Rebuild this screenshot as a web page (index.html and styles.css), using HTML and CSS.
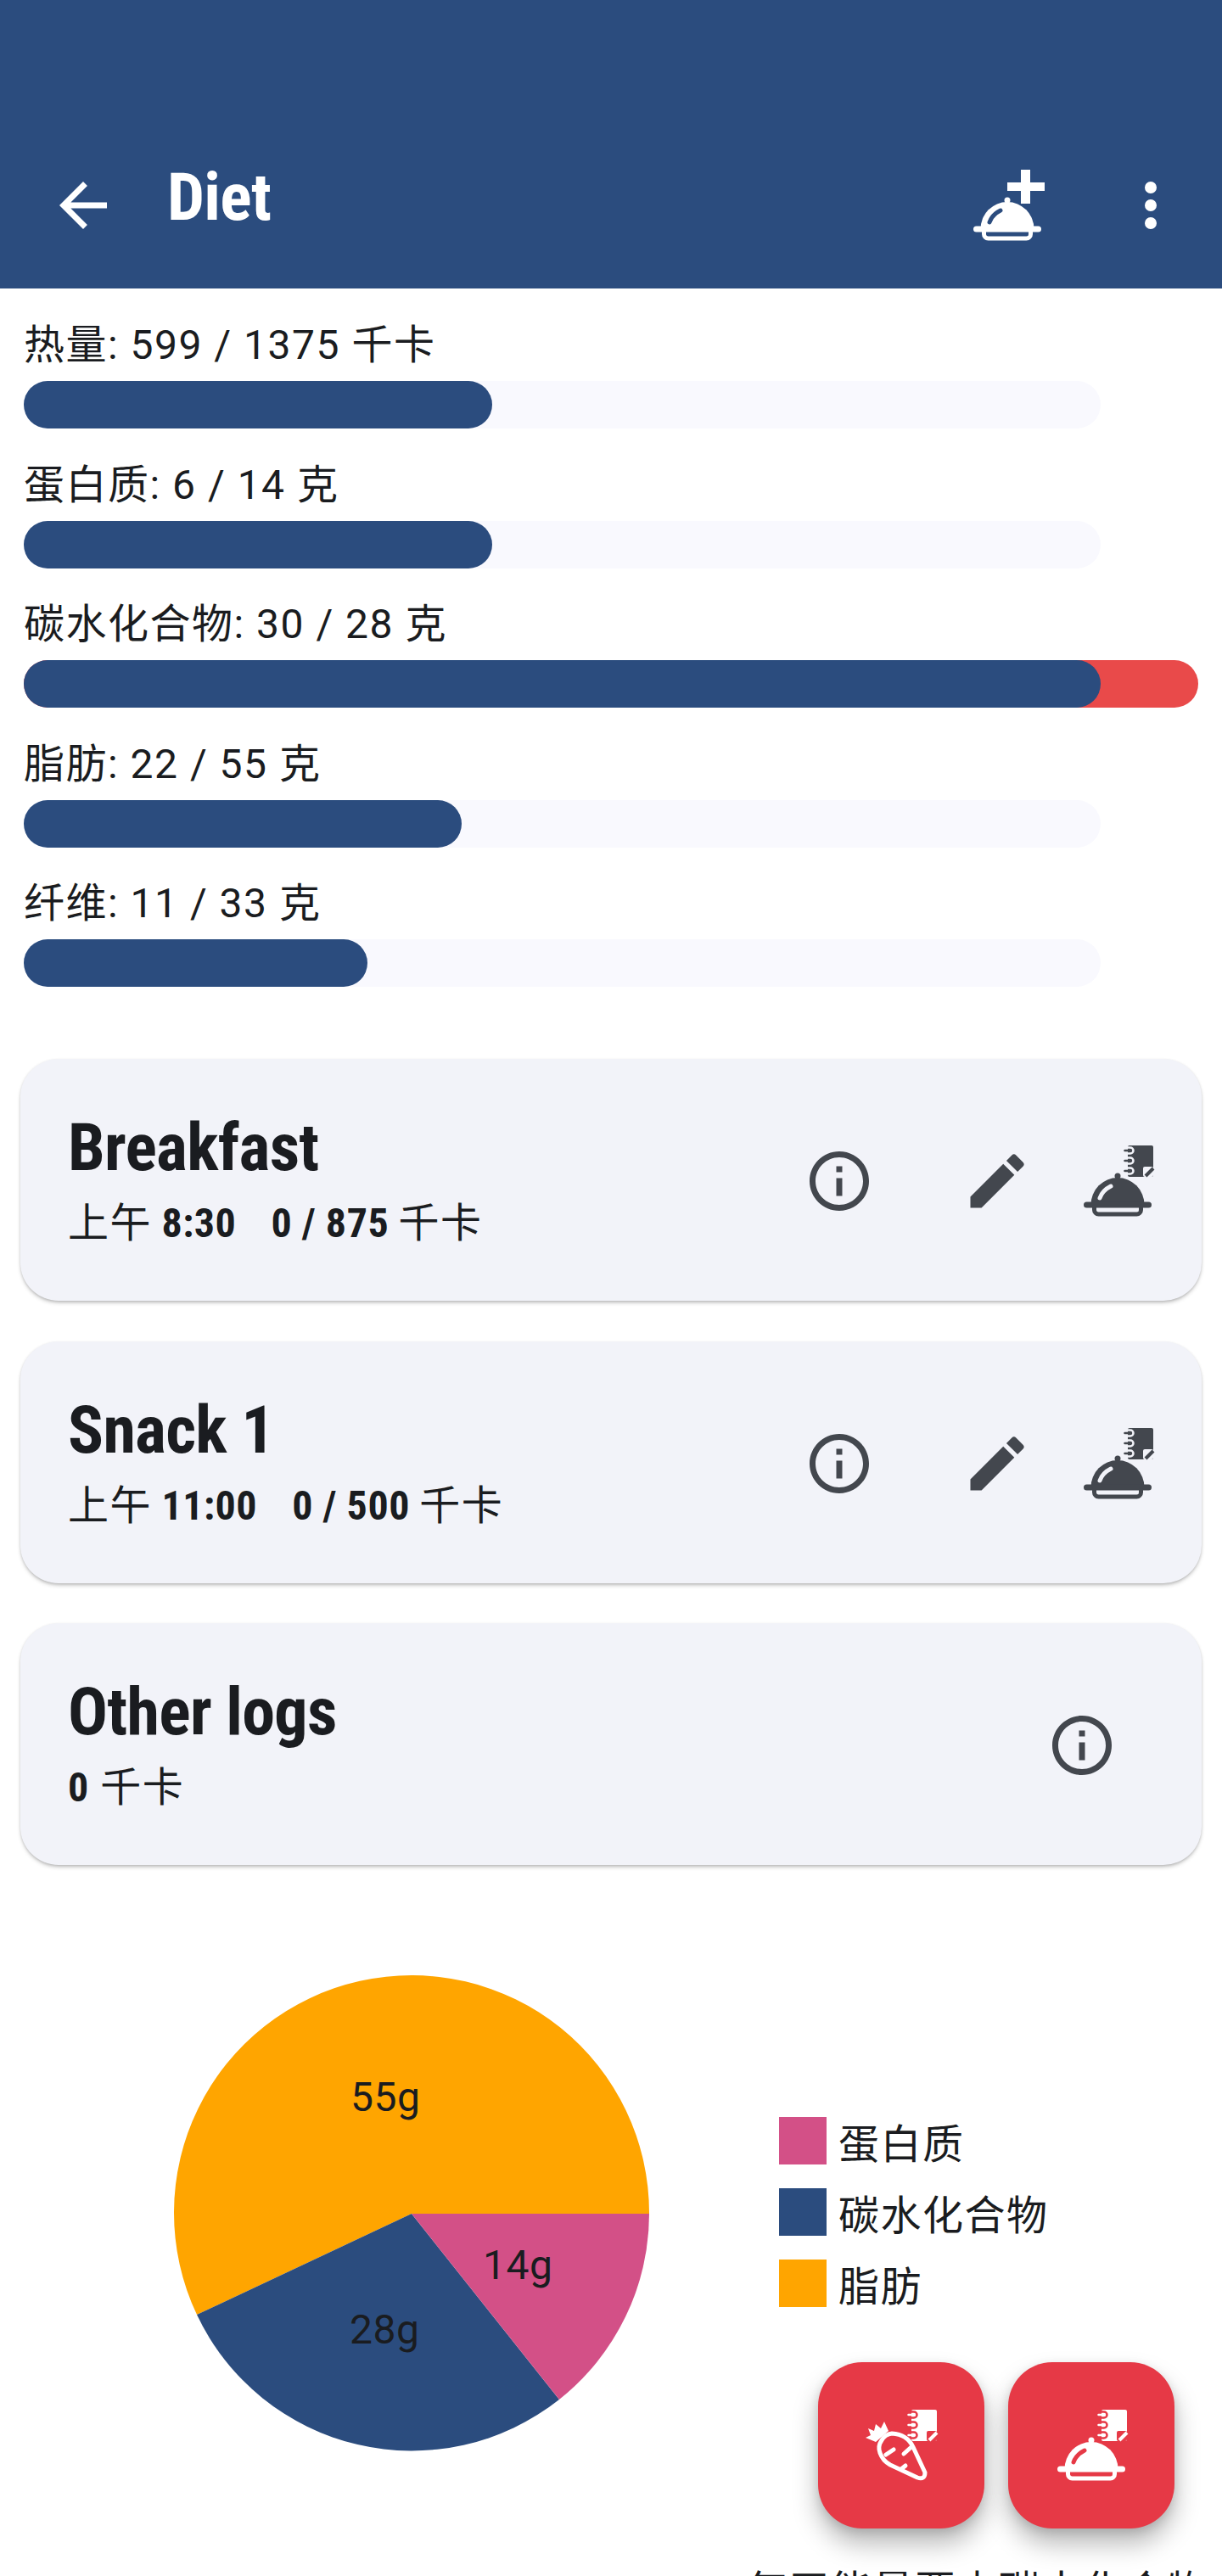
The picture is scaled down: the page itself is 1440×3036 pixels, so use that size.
FILE: index.html
```html
<!DOCTYPE html>
<html lang="zh">
<head>
    <meta charset="UTF-8">
    <title>Diet</title>
    <link rel="stylesheet" href="styles.css">
</head>

<body>

<svg class="defs" width="0" height="0">
    <symbol id="cloche" viewBox="0 0 84 84" overflow="visible">
        <circle cx="42" cy="36" r="3.5"/>
        <path d="M10.500 70 A31.500 32 0 0 1 73.500 70 Z"/>
        <rect x="2" y="66.500" width="80" height="7" rx="3.500"/>
        <path class="cut" d="M21 62 Q24 53 34 48"/>
        <path class="line" d="M14.500 72 v4 a5 5 0 0 0 5 5 h45 a5 5 0 0 0 5 -5 v-4"/>
    </symbol>
    <symbol id="notebook" viewBox="0 0 84 84" overflow="visible">
        <rect x="54" y="0" width="30" height="37" rx="2"/>
        <path class="cut thin" d="M54 2.500 h3 a3.500 3.500 0 0 1 0 7 h-3 M54 14.500 h3 a3.500 3.500 0 0 1 0 7 h-3 M54 26.500 h3 a3.500 3.500 0 0 1 0 7 h-3"/>
        <path class="line thin" d="M50.500 6 h7 M50.500 18 h7 M50.500 30 h7"/>
        <rect class="cut-fill" x="72" y="25" width="12" height="12" rx="2"/>
        <path class="line thick" d="M75 36 L84 27"/>
    </symbol>
</svg>

<header class="top-bar">
    <svg class="icon" viewBox="0 0 24 24"><path d="M20 11H7.830l5.590-5.590L12 4l-8 8 8 8 1.410-1.410L7.830 13H20v-2z"/></svg>
    <h1 class="top-title">Diet</h1>
    <svg class="icon add-meal" viewBox="0 0 84 84">
        <use href="#cloche"/>
        <path d="M58 0h11v15h17v10H69v15H58V25H42V15h16z"/>
    </svg>
    <svg class="icon more" viewBox="0 0 24 24"><path d="M12 8a2 2 0 1 0 0-4 2 2 0 0 0 0 4zm0 2a2 2 0 1 0 0 4 2 2 0 0 0 0-4zm0 6a2 2 0 1 0 0 4 2 2 0 0 0 0-4z"/></svg>
</header>

<section class="goals">
    <div class="goal">
        <div class="goal-label">热量: 599 / 1375 千卡</div>
        <div class="track"><div class="fill" style="width: 552px"></div></div>
    </div>
    <div class="goal">
        <div class="goal-label">蛋白质: 6 / 14 克</div>
        <div class="track"><div class="fill" style="width: 552px"></div></div>
    </div>
    <div class="goal">
        <div class="goal-label">碳水化合物: 30 / 28 克</div>
        <div class="track"><div class="over"></div><div class="fill" style="width: 1269px"></div></div>
    </div>
    <div class="goal">
        <div class="goal-label">脂肪: 22 / 55 克</div>
        <div class="track"><div class="fill" style="width: 516px"></div></div>
    </div>
    <div class="goal">
        <div class="goal-label">纤维: 11 / 33 克</div>
        <div class="track"><div class="fill" style="width: 405px"></div></div>
    </div>
</section>

<section class="meals">
    <article class="card">
        <div class="card-text">
            <h2 class="card-title">Breakfast</h2>
            <p class="card-sub">上午 <b class="time">8:30</b>&nbsp;&nbsp; <b class="kcal">0 / 875</b> 千卡</p>
        </div>
        <svg class="icon info" viewBox="0 0 24 24"><path d="M11 7h2v2h-2zm0 4h2v6h-2zm1-9C6.480 2 2 6.480 2 12s4.480 10 10 10 10-4.480 10-10S17.520 2 12 2zm0 18c-4.410 0-8-3.590-8-8s3.590-8 8-8 8 3.590 8 8-3.590 8-8 8z"/></svg>
        <svg class="icon edit" viewBox="0 0 24 24"><path d="M3 17.250V21h3.750L17.810 9.940l-3.750-3.750L3 17.250zM20.710 7.040a1 1 0 0 0 0-1.410l-2.340-2.340a1 1 0 0 0-1.410 0l-1.830 1.830 3.750 3.750 1.830-1.830z"/></svg>
        <svg class="icon log" viewBox="0 0 84 84"><use href="#cloche"/><use href="#notebook"/></svg>
    </article>

    <article class="card">
        <div class="card-text">
            <h2 class="card-title">Snack 1</h2>
            <p class="card-sub">上午 <b class="time">11:00</b>&nbsp;&nbsp; <b class="kcal">0 / 500</b> 千卡</p>
        </div>
        <svg class="icon info" viewBox="0 0 24 24"><path d="M11 7h2v2h-2zm0 4h2v6h-2zm1-9C6.480 2 2 6.480 2 12s4.480 10 10 10 10-4.480 10-10S17.520 2 12 2zm0 18c-4.410 0-8-3.590-8-8s3.590-8 8-8 8 3.590 8 8-3.590 8-8 8z"/></svg>
        <svg class="icon edit" viewBox="0 0 24 24"><path d="M3 17.250V21h3.750L17.810 9.940l-3.750-3.750L3 17.250zM20.710 7.040a1 1 0 0 0 0-1.410l-2.340-2.340a1 1 0 0 0-1.410 0l-1.830 1.830 3.750 3.750 1.830-1.830z"/></svg>
        <svg class="icon log" viewBox="0 0 84 84"><use href="#cloche"/><use href="#notebook"/></svg>
    </article>

    <article class="card card-other">
        <div class="card-text">
            <h2 class="card-title">Other logs</h2>
            <p class="card-sub"><b>0</b> 千卡</p>
        </div>
        <svg class="icon info" viewBox="0 0 24 24"><path d="M11 7h2v2h-2zm0 4h2v6h-2zm1-9C6.480 2 2 6.480 2 12s4.480 10 10 10 10-4.480 10-10S17.520 2 12 2zm0 18c-4.410 0-8-3.590-8-8s3.590-8 8-8 8 3.590 8 8-3.590 8-8 8z"/></svg>
    </article>
</section>

<section class="chart">
    <svg class="pie" viewBox="0 0 562 562">
        <path fill="#ffa500" d="M281 281 L561 281 A280 280 0 1 0 28 400 Z"/>
        <path fill="#2b4c7e" d="M281 281 L28 400 A280 280 0 0 0 455 500 Z"/>
        <path fill="#d35087" d="M281 281 L455 500 A280 280 0 0 0 561 281 Z"/>
        <text x="209" y="160">55g</text>
        <text x="365" y="358">14g</text>
        <text x="208" y="434">28g</text>
    </svg>
    <ul class="legend">
        <li><span class="swatch protein"></span>蛋白质</li>
        <li><span class="swatch carbs"></span>碳水化合物</li>
        <li><span class="swatch fat"></span>脂肪</li>
    </ul>
</section>

<p class="note">每天能量要由碳水化合物</p>

<button class="fab fab-food">
    <svg class="icon" viewBox="0 0 84 84">
        <path d="M0 33l12 5 15-13-5-11-4 8-6-5-2 8-7-3 3 8z"/>
        <path class="line" d="M31 28 Q23 29 19 36 Q14 43 17 51 Q20 60 29 65 L61 80 Q70 83 70 74 L56 44 Q49 29 31 28 Z M24 53 L33 47 M45 52 L55 43 M42 70 L47 66"/>
        <use href="#notebook"/>
    </svg>
</button>
<button class="fab fab-meal">
    <svg class="icon" viewBox="0 0 84 84"><use href="#cloche"/><use href="#notebook"/></svg>
</button>

</body>

</html>
```

FILE: styles.css
```css
:root {
    --navy:    #2b4c7e;
    --ink:     #1a1c20;
    --card-bg: #f2f3f9;
}

html, body {
    margin:     0;
    padding:    0;
}
body {
    position:   relative;
    height:     3036px;
    overflow:   hidden;
    background: #fff;
    color:      var(--ink);
    font-family: Roboto, "Noto Sans CJK SC", sans-serif;
    font-size:  48px;
    letter-spacing: 1.500px;
}

.defs {
    position:   absolute;
}

/* icons are all 84px boxes (28dp at 3x) */
.icon {
    flex:       none;
    width:      84px;
    height:     84px;
    fill:       currentColor;
    overflow:   visible;
}
.line {
    fill:       none;
    stroke:     currentColor;
    stroke-width: 5;
    stroke-linecap: round;
    stroke-linejoin: round;
}
.cut {
    fill:       none;
    stroke:     var(--cut);
    stroke-width: 5;
    stroke-linecap: round;
}
.cut-fill {
    fill:       var(--cut);
}
.thin {
    stroke-width: 2.500;
}
.thick {
    stroke-width: 4;
    stroke-linecap: butt;
}

.top-bar {
    --cut:      var(--navy);
    display:    flex;
    align-items: flex-start;
    box-sizing: border-box;
    height:     340px;
    padding:    200px 0 0 56px;
    background: var(--navy);
    color:      #fff;
}
.top-title {
    flex:       1;
    margin:     -19px 0 0 57px;
    font-size:  78px;
    font-weight: 700;
    font-stretch: 75%;
    letter-spacing: -0.700px;
    line-height: 104px;
}
.add-meal {
    margin-right: 85px;
}
.more {
    margin-right: 42px;
}

.goals {
    display:    flex;
    flex-direction: column;
    gap:        34.500px;
    padding:    35px 28px 0;
}
.goal {
    display:    flex;
    flex-direction: column;
    gap:        10px;
}
.goal-label {
    line-height: 64px;
}
.track {
    position:   relative;
    width:      1269px;
    height:     56px;
    border-radius: 28px;
    background: #f9f9fe;
}
.fill {
    position:   relative;
    height:     100%;
    border-radius: 28px;
    background: var(--navy);
}
.over {
    position:   absolute;
    top:        0;
    left:       0;
    width:      1384px;
    height:     100%;
    border-radius: 28px;
    background: #e94a4a;
}

.meals {
    display:    flex;
    flex-direction: column;
    gap:        47.500px;
    margin:     85px 24px 0;
}
.card {
    --cut:      var(--card-bg);
    display:    flex;
    align-items: center;
    box-sizing: border-box;
    height:     285px;
    padding:    0 57px 0 56px;
    border-radius: 45px;
    background: var(--card-bg);
    box-shadow: 0 3px 5px -1px rgba(0,0,0,0.25), 0 1px 3px rgba(0,0,0,0.1);
}
.card-text {
    flex:       1;
    padding-top: 2px;
}
.card-title {
    margin:     0 0 13px;
    font-size:  78px;
    font-weight: 700;
    font-stretch: 75%;
    letter-spacing: -0.700px;
    line-height: 88px;
}
.card-sub {
    margin:     0;
    line-height: 64px;
}
.card-sub b {
    font-weight: 700;
    font-stretch: 75%;
    letter-spacing: 0.500px;
}
.card-sub .time {
    margin-left: -2px;
}
.card-sub .kcal {
    margin-left: 1px;
    margin-right: -2px;
}
.card .icon {
    color:      #43474e;
    margin-top: 3px;
}
.info {
    margin-right: 102px;
}
.edit {
    margin-right: 58px;
}
.card-other {
    padding-right: 99px;
}
.card-other .info {
    margin-right: 0;
}

.chart {
    display:    flex;
    align-items: center;
    margin:     130px 0 0 204px;
}
.pie {
    flex:       none;
    width:      562px;
    height:     562px;
}
.pie text {
    font-family: Roboto, sans-serif;
    font-size:  48px;
    letter-spacing: 0.500px;
    fill:       var(--ink);
}
.legend {
    display:    flex;
    flex-direction: column;
    gap:        28px;
    margin:     0 0 4px 152px;
    padding:    0;
    list-style: none;
}
.legend li {
    display:    flex;
    align-items: center;
    gap:        14px;
    height:     56px;
}
.swatch {
    width:      56px;
    height:     56px;
}
.protein { background: #d35087; }
.carbs   { background: var(--navy); }
.fat     { background: #ffa500; }

.note {
    margin:     132px 0 0 880px;
    white-space: nowrap;
    line-height: 64px;
}

.fab {
    --cut:      #e63946;
    position:   absolute;
    top:        2784px;
    display:    grid;
    place-items: center;
    width:      196px;
    height:     196px;
    padding:    0;
    border:     none;
    border-radius: 52px;
    background: #e63946;
    color:      #fff;
    box-shadow: 0 18px 30px rgba(0,0,0,0.28), 0 4px 12px rgba(0,0,0,0.12);
}
.fab-food {
    left:       964px;
}
.fab-meal {
    left:       1188px;
}
```
